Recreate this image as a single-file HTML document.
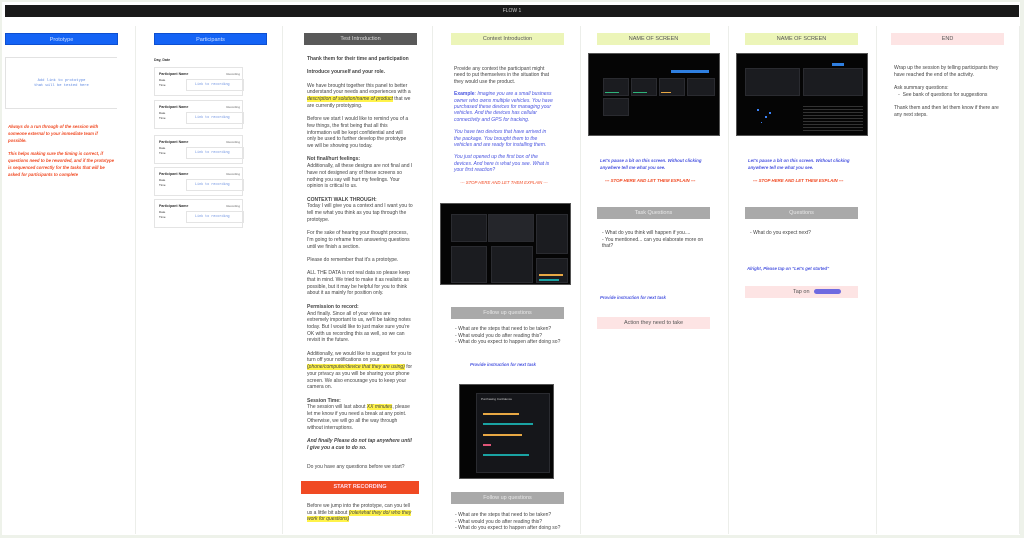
<!DOCTYPE html>
<html><head><meta charset="utf-8"><style>
*{margin:0;padding:0;box-sizing:border-box}
body{width:1024px;height:538px;background:#eef2ea;font-family:"Liberation Sans",sans-serif;position:relative;overflow:hidden;color:#333}
.board{position:absolute;left:2px;top:2px;width:1018px;height:533px;background:#fff}
.a{position:absolute}
.bar{left:5px;top:5px;width:1014px;height:12px;background:#1a1a1a;color:#ccc;font-size:5px;text-align:center;line-height:12px}
.vl{position:absolute;top:26px;width:1px;height:508px;background:#eceeea}
.h{position:absolute;height:12px;font-size:5.5px;text-align:center;line-height:12px}
.blue{background:#1463f5;color:#cfe0ff;border:1px solid #0d4fd0}
.gray{background:#595959;color:#ddd}
.lgray{background:#a9a9a9;color:#e8e8e8}
.green{background:#ecf5b8;color:#555}
.pink{background:#fde4e4;color:#555}
.t{font-size:5px;line-height:6.7px;color:#444}
.t p{margin-bottom:6.7px}
.c4 p{margin-bottom:6px}
.hl{background:#fff34a;font-style:italic}
.red{color:#f04a23;font-style:italic;font-weight:bold}
.bl{color:#4a55e0;font-style:italic}
.card{position:absolute;left:154px;width:89px;height:29px;border:1px solid #e4e4e4;font-size:3.6px;color:#333;background:#fff}
.card b{position:absolute;left:4px;top:4px}
.card i{position:absolute;right:2px;top:4px;font-style:normal;font-size:3px;color:#666}
.card s{position:absolute;left:4px;top:10px;text-decoration:none;line-height:4.5px;font-size:3px}
.card u{position:absolute;left:31px;top:11px;width:58px;height:12px;border:1px solid #e4e4e4;text-decoration:none;font-family:"Liberation Mono",monospace;color:#6a8fe0;font-size:3.4px;line-height:10px;padding-left:8px}
.dark{position:absolute;background:#050505;border:1px solid #555}
.pn{position:absolute;background:#1b1c20;border:1px solid #2a2b30}
ul{list-style:none}
li::before{content:"- ";}
</style></head><body>
<div class="board"></div>
<div class="a bar">FLOW 1</div>
<div class="vl" style="left:135px"></div><div class="vl" style="left:282px"></div><div class="vl" style="left:432px"></div><div class="vl" style="left:580px"></div><div class="vl" style="left:728px"></div><div class="vl" style="left:876px"></div><div class="vl" style="left:1019px"></div>

<!-- col1 -->
<div class="h blue" style="left:5px;top:33px;width:113px">Prototype</div>
<div class="a" style="left:5px;top:57px;width:112px;height:52px;border:1px solid #e2e2e2;border-right:none;font-family:'Liberation Mono',monospace;font-size:3.8px;color:#5b86e0;text-align:center;padding-top:21px;line-height:5.3px">Add link to prototype<br>that will be tested here</div>
<div class="a red" style="left:8px;top:124px;width:106px;font-size:4.3px;line-height:6.8px">Always do a run through of the session with someone external to your immediate team if possible.<br><br>This helps making sure the timing is correct, if questions need to be reworded, and if the prototype is sequenced correctly for the tasks that will be asked for participants to complete</div>

<!-- col2 -->
<div class="h blue" style="left:154px;top:33px;width:113px">Participants</div>
<div class="a" style="left:154px;top:58px;font-size:3.6px;font-weight:bold">Day, Date</div>
<div class="card" style="top:67px"><b>Participant Name</b><i>Recording</i><s>Date<br>Time</s><u>Link to recording</u></div>
<div class="card" style="top:100px"><b>Participant Name</b><i>Recording</i><s>Date<br>Time</s><u>Link to recording</u></div>
<div class="card" style="top:135px"><b>Participant Name</b><i>Recording</i><s>Date<br>Time</s><u>Link to recording</u></div>
<div class="card" style="top:167px"><b>Participant Name</b><i>Recording</i><s>Date<br>Time</s><u>Link to recording</u></div>
<div class="card" style="top:199px"><b>Participant Name</b><i>Recording</i><s>Date<br>Time</s><u>Link to recording</u></div>

<!-- col3 -->
<div class="h gray" style="left:304px;top:33px;width:113px">Test Introduction</div>
<div class="a t" style="left:307px;top:56px;width:106px">
<p><b>Thank them for their time and participation</b></p>
<p><b>Introduce yourself and your role.</b></p>
<p>We have brought together this panel to better understand your needs and experiences with a <span class="hl">description of solution/name of product</span> that we are currently prototyping.</p>
<p>Before we start I would like to remind you of a few things, the first being that all this information will be kept confidential and will only be used to further develop the prototype we will be showing you today.</p>
<p><b>Not final/hurt feelings:</b><br>Additionally, all these designs are not final and I have not designed any of these screens so nothing you say will hurt my feelings. Your opinion is critical to us.</p>
<p><b>CONTEXT/ WALK THROUGH:</b><br>Today I will give you a context and I want you to tell me what you think as you tap through the prototype.</p>
<p>For the sake of hearing your thought process, I'm going to reframe from answering questions until we finish a section.</p>
<p>Please do remember that it's a prototype.</p>
<p>ALL THE DATA is not real data so please keep that in mind. We tried to make it as realistic as possible, but it may be helpful for you to think about it as mainly for position only.</p>
<p><b>Permission to record:</b><br>And finally. Since all of your views are extremely important to us, we'll be taking notes today. But I would like to just make sure you're OK with us recording this as well, so we can revisit in the future.</p>
<p>Additionally, we would like to suggest for you to turn off your notifications on your <span class="hl">(phone/computer/device that they are using)</span> for your privacy as you will be sharing your phone screen. We also encourage you to keep your camera on.</p>
<p><b>Session Time:</b><br>The session will last about <span class="hl">XX minutes</span>, please let me know if you need a break at any point. Otherwise, we will go all the way through without interruptions.</p>
<p><b><i>And finally Please do not tap anywhere until I give you a cue to do so.</i></b></p>
<p style="margin-top:13px">Do you have any questions before we start?</p>
</div>
<div class="h" style="left:301px;top:481px;width:118px;height:13px;background:#f04a23;color:#fde;font-weight:bold;line-height:13px">START RECORDING</div>
<div class="a t" style="left:307px;top:503px;width:106px">Before we jump into the prototype, can you tell us a little bit about <span class="hl">(role/what they do/ who they work for questions)</span></div>

<!-- col4 -->
<div class="h green" style="left:451px;top:33px;width:113px">Context Introduction</div>
<div class="a t c4" style="left:454px;top:66px;width:100px;line-height:6.4px">
<p>Provide any context the participant might need to put themselves in the situation that they would use the product.</p>
<p class="bl"><b style="font-style:normal">Example</b>: Imagine you are a small business owner who owns multiple vehicles. You have purchased these devices for managing your vehicles. And the devices has cellular connectivity and GPS for tracking.</p>
<p class="bl">You have two devices that have arrived in the package. You brought them to the vehicles and are ready for installing them.</p>
<p class="bl">You just opened up the first box of the devices. And here is what you see. What is your first reaction?</p>
<p class="red" style="font-weight:normal;text-align:center;font-size:4.3px">--- STOP HERE AND LET THEM EXPLAIN ---</p>
</div>
<div class="dark" style="left:440px;top:203px;width:131px;height:82px">
<div class="pn" style="left:10px;top:10px;width:36px;height:28px"></div><div class="pn" style="left:47px;top:10px;width:46px;height:28px;background:#25262b"></div><div class="pn" style="left:95px;top:10px;width:32px;height:40px"></div>
<div class="pn" style="left:10px;top:42px;width:36px;height:37px"></div><div class="pn" style="left:50px;top:42px;width:42px;height:37px"></div><div class="pn" style="left:95px;top:54px;width:32px;height:25px"></div>
<div class="a" style="left:98px;top:70px;width:24px;height:2px;background:#e8a844"></div><div class="a" style="left:98px;top:75px;width:20px;height:2px;background:#1aa3a3"></div>
</div>
<div class="h lgray" style="left:451px;top:307px;width:113px">Follow up questions</div>
<ul class="a t" style="left:455px;top:326px;width:110px"><li>What are the steps that need to be taken?</li><li>What would you do after reading this?</li><li>What do you expect to happen after doing so?</li></ul>
<div class="a bl" style="left:470px;top:362px;font-size:4.3px;font-weight:bold">Provide instruction for next task</div>
<div class="dark" style="left:459px;top:384px;width:95px;height:95px">
<div class="pn" style="left:16px;top:8px;width:74px;height:80px;background:#15161a">
<div class="a" style="left:4px;top:3px;font-size:3px;color:#ccc">Purchasing Confidence</div>
<div class="a" style="left:6px;top:19px;width:36px;height:2px;background:#e8a844"></div>
<div class="a" style="left:6px;top:29px;width:50px;height:2px;background:#1aa3a3"></div>
<div class="a" style="left:6px;top:40px;width:39px;height:2px;background:#e8a844"></div>
<div class="a" style="left:6px;top:50px;width:8px;height:2px;background:#e05577"></div>
<div class="a" style="left:6px;top:60px;width:46px;height:2px;background:#1aa3a3"></div>
</div></div>
<div class="h lgray" style="left:451px;top:492px;width:113px">Follow up questions</div>
<ul class="a t" style="left:455px;top:512px;width:110px"><li>What are the steps that need to be taken?</li><li>What would you do after reading this?</li><li>What do you expect to happen after doing so?</li></ul>

<!-- col5 -->
<div class="h green" style="left:597px;top:33px;width:113px">NAME OF SCREEN</div>
<div class="dark" style="left:588px;top:53px;width:132px;height:83px">
<div class="pn" style="left:14px;top:24px;width:26px;height:18px"></div><div class="pn" style="left:42px;top:24px;width:26px;height:18px"></div><div class="pn" style="left:70px;top:24px;width:26px;height:18px"></div><div class="pn" style="left:98px;top:24px;width:28px;height:18px"></div>
<div class="pn" style="left:14px;top:44px;width:26px;height:18px"></div>
<div class="a" style="left:82px;top:16px;width:38px;height:3px;background:#2f7fe0"></div>
<div class="a" style="left:16px;top:38px;width:14px;height:1px;background:#2eb37a"></div><div class="a" style="left:44px;top:38px;width:14px;height:1px;background:#2eb37a"></div><div class="a" style="left:72px;top:38px;width:10px;height:1px;background:#e8a844"></div>
</div>
<div class="a bl" style="left:600px;top:157px;width:110px;font-size:4.4px;line-height:7px;font-weight:bold">Let's pause a bit on this screen. Without clicking anywhere tell me what you see.</div>
<div class="a red" style="left:605px;top:178px;font-size:4.4px">--- STOP HERE AND LET THEM EXPLAIN ---</div>
<div class="h lgray" style="left:597px;top:207px;width:113px">Task Questions</div>
<ul class="a t" style="left:602px;top:230px;width:106px"><li>What do you think will happen if you....</li><li>You mentioned... can you elaborate more on that?</li></ul>
<div class="a bl" style="left:600px;top:295px;font-size:4.3px;font-weight:bold">Provide instruction for next task</div>
<div class="h pink" style="left:597px;top:317px;width:113px">Action they need to take</div>

<!-- col6 -->
<div class="h green" style="left:745px;top:33px;width:113px">NAME OF SCREEN</div>
<div class="dark" style="left:736px;top:53px;width:132px;height:83px">
<div class="pn" style="left:8px;top:14px;width:55px;height:28px"></div><div class="pn" style="left:66px;top:14px;width:60px;height:28px"></div>
<div class="a" style="left:95px;top:9px;width:12px;height:3px;background:#2f7fe0"></div>
<div class="a" style="left:20px;top:55px;width:2px;height:2px;background:#3b82f6"></div><div class="a" style="left:28px;top:62px;width:2px;height:2px;background:#3b82f6"></div><div class="a" style="left:32px;top:58px;width:2px;height:2px;background:#3b82f6"></div><div class="a" style="left:24px;top:68px;width:1px;height:1px;background:#3b82f6"></div>
<div class="a" style="left:66px;top:50px;width:60px;height:28px;background:repeating-linear-gradient(#050505 0 2px,#333 2px 3px)"></div>
</div>
<div class="a bl" style="left:748px;top:157px;width:110px;font-size:4.4px;line-height:7px;font-weight:bold">Let's pause a bit on this screen. Without clicking anywhere tell me what you see.</div>
<div class="a red" style="left:753px;top:178px;font-size:4.4px">--- STOP HERE AND LET THEM EXPLAIN ---</div>
<div class="h lgray" style="left:745px;top:207px;width:113px">Questions</div>
<ul class="a t" style="left:750px;top:230px;width:106px"><li>What do you expect next?</li></ul>
<div class="a bl" style="left:747px;top:266px;font-size:4.3px;font-weight:bold">Alright, Please tap on "Let's get started"</div>
<div class="h pink" style="left:745px;top:286px;width:113px;text-align:left;padding-left:48px">Tap on <span style="display:inline-block;width:27px;height:5px;background:#6f6ae0;border-radius:3px;vertical-align:middle;margin-left:3px"></span></div>

<!-- col7 -->
<div class="h pink" style="left:891px;top:33px;width:113px">END</div>
<div class="a t" style="left:894px;top:65px;width:110px">
<p>Wrap up the session by telling participants they have reached the end of the activity.</p>
<p>Ask summary questions:<br>&nbsp;&nbsp;&nbsp;-&nbsp; See bank of questions for suggestions</p>
<p>Thank them and then let them know if there are any next steps.</p>
</div>
</body></html>
